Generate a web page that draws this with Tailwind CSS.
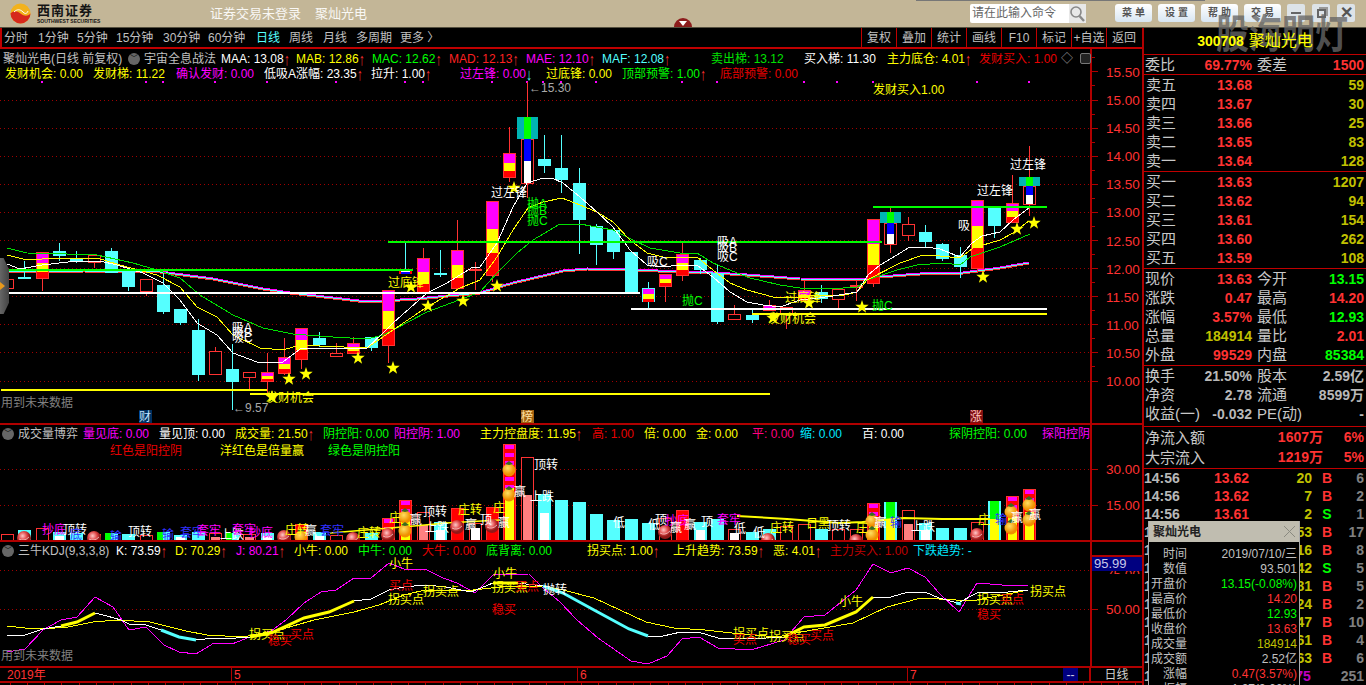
<!DOCTYPE html>
<html lang="zh">
<head>
<meta charset="UTF-8">
<title>聚灿光电 日线</title>
<script src="https://cdn.jsdelivr.net/npm/@tailwindcss/browser@4"></script>
</head>
<body class="relative w-[1366px] h-[685px] overflow-hidden bg-black text-[12px] leading-none text-[#c0c0c0] whitespace-nowrap [font-family:'Liberation_Sans','Noto_Sans_CJK_SC',sans-serif]">

<!-- 顶部标题栏 -->
<header class="relative flex items-center h-[28px] bg-[#c3b697] border-b border-[#55503f]">
  <svg class="ml-[10px]" width="21" height="21" viewBox="0 0 21 21">
    <circle cx="10.5" cy="10.5" r="10" fill="#f2b21c"/>
    <path d="M0.5 10.5a10 10 0 0 0 20 0c-3 3-6 3-10 0s-7-3-10 0z" fill="#d6281c"/>
    <path d="M4 9c3-3 6-3 9 0s4 1 5-1" fill="none" stroke="#fff" stroke-width="1"/>
  </svg>
  <div class="ml-[6px] w-[60px] text-[#141414]">
    <div class="text-[13px] font-bold tracking-[1px] leading-[13px]">西南证券</div>
    <div class="text-[5px] font-bold leading-[6px] mt-[1px]">SOUTHWEST SECURITIES</div>
  </div>
  <div class="ml-[113px] text-[13px] text-white/90">证券交易未登录</div>
  <div class="ml-[14px] text-[13px] text-white/90">聚灿光电</div>
  <div class="ml-auto mr-[11px] flex items-center gap-[6px] h-[19px] mt-[-1px]">
    <div class="flex items-center w-[116px] h-[19px] mr-[23px] bg-white rounded-[2px] text-[#666] pl-[2px]">
      <span class="flex-1">请在此输入命令</span>
      <svg class="bg-[#e8e8e8]" width="17" height="19" viewBox="0 0 17 19"><circle cx="7" cy="8" r="5" fill="none" stroke="#888" stroke-width="1.6"/><path d="M10.5 12l4.5 5" stroke="#888" stroke-width="2.4"/></svg>
    </div>
    <div class="w-[37px] h-[18px] flex items-center justify-center gap-[3px] rounded-[3px] bg-gradient-to-b from-white to-[#d8e6f2] text-[#555] text-[10px] font-bold">菜<span>单</span></div>
    <div class="w-[37px] h-[18px] flex items-center justify-center gap-[3px] rounded-[3px] bg-gradient-to-b from-white to-[#d8e6f2] text-[#555] text-[10px] font-bold">设<span>置</span></div>
    <div class="w-[37px] h-[18px] flex items-center justify-center gap-[3px] rounded-[3px] bg-gradient-to-b from-white to-[#d8e6f2] text-[#555] text-[10px] font-bold">帮<span>助</span></div>
    <div class="w-[37px] h-[18px] flex items-center justify-center gap-[3px] rounded-[3px] bg-gradient-to-b from-white to-[#d8e6f2] text-[#555] text-[10px] font-bold">交<span>易</span></div>
    <div class="flex items-center gap-[7px]">
      <div class="w-[18px] h-[18px] flex items-center justify-center rounded-[2px] bg-[#dde3e8]"><div class="w-[10px] h-[2px] bg-[#666]"></div></div>
      <div class="w-[18px] h-[18px] flex items-center justify-center rounded-[2px] bg-[#dde3e8]"><div class="w-[9px] h-[9px] border-2 border-[#666] shadow-[2px_-2px_0_#999]"></div></div>
      <div class="w-[18px] h-[18px] flex items-center justify-center rounded-[2px] bg-[#dde3e8] text-[#555] text-[16px] font-bold">✕</div>
    </div>
  </div>
  <!-- 收起按钮 -->
  <div class="absolute left-[674px] top-[18px] w-[18px] h-[9px] rounded-t-[9px] bg-[#8c1c1c] flex justify-center">
    <div class="mt-[3px] w-0 h-0 border-x-[4px] border-x-transparent border-t-[5px] border-t-white"></div>
  </div>
  <div class="absolute left-[916px] right-[161px] top-0 h-[1px] bg-[#777]"></div>
</header>

<main class="flex h-[657px]">
  <!-- 左侧图表列 -->
  <section class="w-[1142px] flex flex-col [&_i]:inline-block [&_i]:w-[8px] [&_i]:origin-center [&_i]:scale-y-[1.4]">
    <nav class="flex items-center h-[21px] border-b-2 border-[#c00000] border-l-2 border-l-[#c00000] shrink-0">
      <a class="w-[36px] pl-[2px]">分时</a>
      <a class="w-[39px]">1分钟</a>
      <a class="w-[39px]">5分钟</a>
      <a class="w-[47px]">15分钟</a>
      <a class="w-[45px]">30分钟</a>
      <a class="w-[48px]">60分钟</a>
      <a class="w-[33px] text-[#55ffff]">日线</a>
      <a class="w-[34px]">周线</a>
      <a class="w-[33px]">月线</a>
      <a class="w-[44px]">多周期</a>
      <a>更多 〉</a>
      <div class="ml-auto flex h-[19px] mr-[1px]">
        <a class="w-[35px] flex items-center justify-center border-l border-[#c00000]">复权</a>
        <a class="w-[35px] flex items-center justify-center border-l border-[#c00000]">叠加</a>
        <a class="w-[35px] flex items-center justify-center border-l border-[#c00000]">统计</a>
        <a class="w-[35px] flex items-center justify-center border-l border-[#c00000]">画线</a>
        <a class="w-[35px] flex items-center justify-center border-l border-[#c00000]">F10</a>
        <a class="w-[35px] flex items-center justify-center border-l border-[#c00000]">标记</a>
        <a class="w-[35px] flex items-center justify-center border-l border-[#c00000]">+自选</a>
        <a class="w-[35px] flex items-center justify-center border-l border-[#c00000]">返回</a>
      </div>
    </nav>

    <!-- K线主图 -->
    <div class="relative h-[376px] shrink-0">
      <svg id="kline" class="absolute inset-0" width="1142" height="376" viewBox="0 49 1142 376"></svg>
      <div class="relative flex items-center h-[17px] pl-[3px] pt-[2px]">
        <span class="w-[125px]">聚灿光电(日线 前复权)</span>
        <span class="w-[16px]"><span class="block w-[12px] h-[12px] rounded-full bg-[#666] text-center text-[8px] leading-[12px] text-black">﹀</span></span>
        <span class="w-[77px]">宇宙全息战法</span>
        <span class="w-[75px] text-white">MAA: 13.08<i class="not-italic text-[#ff3232]">↑</i></span>
        <span class="w-[76px] text-[#ffff00]">MAB: 12.86<i class="not-italic text-[#ff3232]">↑</i></span>
        <span class="w-[77px] text-[#00ff00]">MAC: 12.62<i class="not-italic text-[#ff3232]">↑</i></span>
        <span class="w-[77px] text-[#ff2020]">MAD: 12.13<i class="not-italic text-[#ff3232]">↑</i></span>
        <span class="w-[76px] text-[#ff00ff]">MAE: 12.10<i class="not-italic text-[#ff3232]">↑</i></span>
        <span class="w-[109px] text-[#55ffff]">MAF: 12.08<i class="not-italic text-[#ff3232]">↑</i></span>
        <span class="w-[93px] text-[#00e000]">卖出梯: 13.12</span>
        <span class="w-[83px] text-white">买入梯: 11.30</span>
        <span class="w-[92px] text-[#ffff00]">主力底仓: 4.01<i class="not-italic text-[#ff3232]">↑</i></span>
        <span class="w-[82px] overflow-hidden text-[#e80000]">发财买入: 1.00</span>
        <span class="w-[19px] text-[#999]">◇</span>
        <span class="block w-[11px] h-[11px] rounded-[2px] border border-[#777] bg-[#222]"></span>
      </div>
      <div class="relative flex items-center h-[15px] pl-[5px]">
        <span class="w-[88px] text-[#ffff00]">发财机会: 0.00</span>
        <span class="w-[83px] text-[#ffff00]">发财梯: 11.22</span>
        <span class="w-[88px] text-[#ff00ff]">确认发财: 0.00</span>
        <span class="w-[107px] text-white">低吸A涨幅: 23.35<i class="not-italic text-[#ff3232]">↑</i></span>
        <span class="w-[89px] text-white">拉升: 1.00<i class="not-italic text-[#ff3232]">↑</i></span>
        <span class="w-[86px] text-[#ff00ff]">过左锋: 0.00<i class="not-italic text-[#55ffff]">↓</i></span>
        <span class="w-[76px] text-[#ffff00]">过底锋: 0.00</span>
        <span class="w-[98px] text-[#00ff00]">顶部预警: 1.00<i class="not-italic text-[#ff3232]">↑</i></span>
        <span class="text-[#e80000]">底部预警: 0.00</span>
      </div>
    </div>

    <!-- 成交量副图 -->
    <div class="relative h-[117px] shrink-0">
      <svg id="volume" class="absolute inset-0" width="1142" height="117" viewBox="0 425 1142 117"></svg>
      <div class="relative flex items-center h-[17px] pl-[2px]">
        <span class="w-[16px]"><span class="block w-[12px] h-[12px] rounded-full bg-[#666] text-center text-[8px] leading-[12px] text-black">﹀</span></span>
        <span class="w-[65px]">成交量博弈</span>
        <span class="w-[76px] text-[#ff00ff]">量见底: 0.00</span>
        <span class="w-[76px] text-white">量见顶: 0.00</span>
        <span class="w-[88px] text-[#ffff00]">成交量: 21.50<i class="not-italic text-[#ff3232]">↑</i></span>
        <span class="w-[71px] text-[#00ff00]">阴控阳: 0.00</span>
        <span class="w-[86px] text-[#ff00ff]">阳控阴: 1.00</span>
        <span class="w-[112px] text-[#ffff00]">主力控盘度: 11.95<i class="not-italic text-[#ff3232]">↑</i></span>
        <span class="w-[52px] text-[#e80000]">高: 1.00</span>
        <span class="w-[52px] text-[#ffff00]">倍: 0.00</span>
        <span class="w-[56px] text-[#ffff00]">金: 0.00</span>
        <span class="w-[48px] text-[#ff0080]">平: 0.00</span>
        <span class="w-[62px] text-[#00e8ff]">缩: 0.00</span>
        <span class="w-[87px] text-white">百: 0.00</span>
        <span class="w-[93px] text-[#00ff00]">探阴控阳: 0.00</span>
        <span class="text-[#ff00ff]">探阳控阴</span>
      </div>
      <div class="relative flex h-[17px] items-center pl-[110px]">
        <span class="w-[110px] text-[#e80000]">红色是阳控阴</span>
        <span class="w-[108px] text-[#ffff00]">洋红色是倍量赢</span>
        <span class="text-[#00ff00]">绿色是阴控阳</span>
      </div>
    </div>

    <!-- KDJ副图 -->
    <div class="relative h-[124px] shrink-0">
      <svg id="kdj" class="absolute inset-0" width="1142" height="124" viewBox="0 542 1142 124"></svg>
      <div class="relative flex items-center h-[18px] pl-[2px]">
        <span class="w-[16px]"><span class="block w-[12px] h-[12px] rounded-full bg-[#666] text-center text-[8px] leading-[12px] text-black">﹀</span></span>
        <span class="w-[98px]">三牛KDJ(9,3,3,8)</span>
        <span class="w-[59px] text-white">K: 73.59<i class="not-italic text-[#ff3232]">↑</i></span>
        <span class="w-[61px] text-[#ffff00]">D: 70.29<i class="not-italic text-[#ff3232]">↑</i></span>
        <span class="w-[58px] text-[#ff00ff]">J: 80.21<i class="not-italic text-[#ff3232]">↑</i></span>
        <span class="w-[64px] text-[#ffff00]">小牛: 0.00</span>
        <span class="w-[64px] text-[#00ff00]">中牛: 0.00</span>
        <span class="w-[64px] text-[#e80000]">大牛: 0.00</span>
        <span class="w-[101px] text-[#00ff00]">底背离: 0.00</span>
        <span class="w-[86px] text-[#ffff00]">拐买点: 1.00<i class="not-italic text-[#ff3232]">↑</i></span>
        <span class="w-[100px] text-[#ffff00]">上升趋势: 73.59<i class="not-italic text-[#ff3232]">↑</i></span>
        <span class="w-[57px] text-[#ffff00]">恶: 4.01<i class="not-italic text-[#ff3232]">↑</i></span>
        <span class="w-[83px] text-[#c00000]">主力买入: 1.00</span>
        <span class="text-[#00e8ff]">下跌趋势: -</span>
      </div>
      <div class="absolute left-[1px] top-[108px] text-[#808080]">用到未来数据</div>
    </div>

    <!-- 时间轴 -->
    <div class="relative h-[17px] shrink-0 border-y-2 border-[#b00000] flex items-center text-[#ff3232]">
      <span class="w-[232px] pl-[7px] border-r border-[#b00000] h-full flex items-center">2019年</span>
      <span class="w-[346px] pl-[2px] border-r border-[#b00000] h-full flex items-center">5</span>
      <span class="w-[330px] pl-[2px] border-r border-[#b00000] h-full flex items-center">6</span>
      <span class="w-[155px] pl-[2px] h-full flex items-center">7</span>
      <span class="w-[15px] h-full bg-[#000080] text-white/80 flex items-center justify-center">--</span>
      <span class="w-[13px] h-full border-r-2 border-[#b00000]"></span>
      <span class="flex-1 text-center text-[#d0d0d0]">日线</span>
    </div>
    <svg id="ruler" class="shrink-0" width="1142" height="2" viewBox="0 0 1142 2"></svg>
  </section>

  <!-- 右侧盘口 -->
  <aside id="quote" class="relative w-[224px] border-l-2 border-[#b00000] text-[15px] text-[#c8c8c8] font-bold [&_.lb]:font-normal"></aside>
</main>

<!-- 水印 -->
<div class="absolute left-[1216px] top-[13px] origin-top scale-y-[1.2] text-[33px] leading-[36px] font-bold text-[#666666]/80">股海明灯</div>
<div class="absolute left-[1144px] w-[222px] top-[33px] flex justify-center items-center gap-[5px] text-[#ffff00] text-[14px] font-bold"><span>300708</span><span class="text-[16px] font-normal">聚灿光电</span></div>

<!-- 数据浮窗 -->
<div class="absolute left-[1148px] top-[521px] w-[152px] h-[164px] bg-black border-l border-r border-[#aaa] overflow-hidden">
  <div class="flex items-center justify-between h-[21px] bg-[#c0bdb0] pl-[4px] pr-[3px] text-[12px] font-bold text-[#222]">聚灿光电
    <svg width="13" height="13" viewBox="0 0 13 13"><path d="M1 1l11 11M12 1L1 12" stroke="#8a8a80" stroke-width="1"/></svg>
  </div>
  <div class="mt-[4px] text-[12px]">
    <div class="flex h-[15px] items-center"><span class="w-[38px] text-right text-[#c0c0c0]">时间</span><span class="flex-1 text-right pr-[2px] text-[#c0c0c0]">2019/07/10/三</span></div>
    <div class="flex h-[15px] items-center"><span class="w-[38px] text-right text-[#c0c0c0]">数值</span><span class="flex-1 text-right pr-[2px] text-[#c0c0c0]">93.501</span></div>
    <div class="flex h-[15px] items-center"><span class="w-[38px] text-right text-[#c0c0c0]">开盘价</span><span class="flex-1 text-right pr-[2px] text-[#00ff00]">13.15(-0.08%)</span></div>
    <div class="flex h-[15px] items-center"><span class="w-[38px] text-right text-[#c0c0c0]">最高价</span><span class="flex-1 text-right pr-[2px] text-[#ff3232]">14.20</span></div>
    <div class="flex h-[15px] items-center"><span class="w-[38px] text-right text-[#c0c0c0]">最低价</span><span class="flex-1 text-right pr-[2px] text-[#00ff00]">12.93</span></div>
    <div class="flex h-[15px] items-center"><span class="w-[38px] text-right text-[#c0c0c0]">收盘价</span><span class="flex-1 text-right pr-[2px] text-[#ff3232]">13.63</span></div>
    <div class="flex h-[15px] items-center"><span class="w-[38px] text-right text-[#c0c0c0]">成交量</span><span class="flex-1 text-right pr-[2px] text-[#c0c000]">184914</span></div>
    <div class="flex h-[15px] items-center"><span class="w-[38px] text-right text-[#c0c0c0]">成交额</span><span class="flex-1 text-right pr-[2px] text-[#c0c0c0]">2.52亿</span></div>
    <div class="flex h-[15px] items-center"><span class="w-[38px] text-right text-[#c0c0c0]">涨幅</span><span class="flex-1 text-right pr-[2px] text-[#ff3232]">0.47(3.57%)</span></div>
    <div class="flex h-[15px] items-center"><span class="w-[38px] text-right text-[#c0c0c0]">振幅</span><span class="flex-1 text-right pr-[2px] text-[#c0c0c0]">1.27(9.66%)</span></div>
  </div>
</div>

<!-- 左侧隐藏把手 -->
<div class="absolute left-0 top-[258px] w-[9px] h-[56px] bg-gradient-to-r from-[#666] to-[#444] [clip-path:polygon(0_0,40%_0,100%_20%,100%_80%,40%_100%,0_100%)] flex items-center">
  <div class="w-0 h-0 border-y-[4px] border-y-transparent border-l-[5px] border-l-[#e89a1c]"></div>
</div>

<script>
const RED = '#ff3232', DRED = '#b00000', CYAN = '#55ffff', YEL = '#ffff00', MAG = '#ff00ff', GRN = '#00ff00';
const cx = i => Math.round(7 + 17.32 * i);
const priceY = p => 381 - (p - 10) * 56.2;

const rect = (x, y, w, h, fill, stroke) =>
  `<rect x="${x}" y="${y}" width="${w}" height="${h}" fill="${fill}"${stroke ? ` stroke="${stroke}"` : ''} shape-rendering="crispEdges"/>`;
const line = (x1, y1, x2, y2, c, w = 1, extra = '') =>
  `<line x1="${x1}" y1="${y1}" x2="${x2}" y2="${y2}" stroke="${c}" stroke-width="${w}" shape-rendering="crispEdges" ${extra}/>`;
const poly = (pts, c, w = 1, dy = 0) =>
  `<polyline points="${pts.map(p => p[0] + ',' + (p[1] + dy)).join(' ')}" fill="none" stroke="${c}" stroke-width="${w}"${w === 1 ? ' shape-rendering="crispEdges"' : ''}/>`;
const text = (x, y, t, c, size = 12, anchor = 'start') =>
  `<text x="${x}" y="${y}" fill="${c}" font-size="${size}" text-anchor="${anchor}">${t}</text>`;
const star = (x, y, r = 7) => {
  let pts = [];
  for (let k = 0; k < 10; k++) {
    const a = -Math.PI / 2 + k * Math.PI / 5, rr = k % 2 ? r * 0.4 : r;
    pts.push((x + rr * Math.cos(a)).toFixed(1) + ',' + (y + rr * Math.sin(a)).toFixed(1));
  }
  return `<polygon points="${pts.join(' ')}" fill="#ffff00"/>`;
};

// [序号, 类型, 实体上沿, 实体下沿, 上影, 下影]  r空心红 c青 t三色 s特殊
const candles = [
  [0,'r',279,288,279,288],[1,'d',277,277,261,277],[2,'t',252,278,252,291],[3,'c',251,256,243,261],
  [4,'d',259,259,251,263],[5,'r',255,262,255,268],[6,'c',251,273,248,273],[7,'c',271,287,268,291],
  [8,'r',279,291,279,296],[9,'c',285,312,273,314],[10,'c',309,323,309,325],[11,'c',330,375,319,381],
  [12,'r',351,374,347,374],[13,'c',369,382,344,410],[14,'r',372,377,372,390],[15,'t',372,381,353,393],
  [16,'t',357,373,338,375],[17,'t',328,359,328,369],[18,'c',338,345,332,347],[19,'r',353,356,343,356],
  [20,'t',343,353,337,353],[21,'c',337,348,337,351],[22,'t',290,345,290,363],[23,'x',269,274,243,274],
  [24,'t',258,293,248,293],[25,'d',273,275,250,277],[26,'t',250,288,220,288],[27,'e',269,270,262,290],
  [28,'t',201,275,201,282],[29,'t',153,177,127,182],[30,'s',117,183,82,198],[31,'c',159,166,135,173],
  [32,'c',168,180,135,193],[33,'c',183,220,168,254],[34,'c',226,245,224,265],[35,'c',230,252,230,259],
  [36,'c',252,293,252,293],[37,'y',288,302,282,308],[38,'t',274,286,274,302],[39,'t',254,275,243,281],
  [40,'c',260,270,258,274],[41,'c',273,322,265,324],[42,'r',314,319,305,319],[43,'c',315,320,310,323],
  [44,'t',305,310,300,311],[45,'r',307,313,307,329],[46,'t',290,300,280,300],[47,'c',292,299,285,303],
  [48,'r',289,299,288,308],[49,'e',285,287,280,301],[50,'t',219,283,219,287],[51,'s',212,244,208,253],
  [52,'r',224,235,217,241],[53,'c',232,242,225,247],[54,'c',244,259,243,261],[55,'c',255,267,247,278],
  [56,'t',200,268,200,272],[57,'c',208,226,208,238],[58,'t',203,222,175,222],[59,'s',177,204,146,216]
];

function drawCandle([i, t, top, bot, wt, wb]) {
  const x = cx(i), h = bot - top;
  const wickColor = (t === 'c' || t === 'd' || t === 'y' || t === 'x') ? CYAN : RED;
  let s = line(x + .5, wt, x + .5, wb, wickColor);
  if (t === 'r') s += rect(x - 6 + .5, top + .5, 12, Math.max(h, 2), '#000', RED);
  if (t === 'e') s += rect(x - 6, top, 13, h + 1, RED);
  if (t === 'c') s += rect(x - 6, top, 13, Math.max(h, 2), CYAN);
  if (t === 'd') s += rect(x - 6, top, 13, 2, CYAN);
  if (t === 't' || t === 'y') {
    const a = Math.round(h * .37), b = Math.round(h * .33);
    if (t === 'y') s += rect(x - 6, top, 13, h, CYAN);
    if (t === 't') s += rect(x - 6 + .5, top + .5, 12, h, '#000', RED);
    s += rect(x - 5, top + 1, 11, a, MAG) + rect(x - 5, top + 1 + a, 11, b, YEL) + rect(x - 5, top + 1 + a + b, 11, h - a - b - 1, '#ff0000');
  }
  if (t === 'x') s += rect(x - 6, top, 13, h, '#ff0000') + rect(x - 4, top + 1, 9, 2, '#fff') + rect(x - 4, top + 3, 9, 2, '#0000ff');
  if (t === 's') {
    const band = Math.round(h / 3);
    s += rect(x - 6 + .5, top + band + .5, 12, h - band, '#000', RED);
    s += rect(x - 10, top, 21, band, '#00b4b4') + rect(x - 3, top, 7, band, GRN);
    s += rect(x - 3, top + band, 7, band, '#0000ff') + rect(x - 3, top + band * 2, 7, h - band * 2, '#fff');
  }
  return s;
}

const maWhite = [[7,264],[20,269],[42,265],[77,261],[100,261],[117,265],[143,273],[163,283],[180,300],[197,323],[217,335],[233,353],[257,362],[267,363],[283,362],[300,349],[320,348],[353,348],[367,348],[383,333],[393,323],[427,293],[447,283],[473,267],[480,267],[497,243],[513,207],[527,183],[543,178],[552,178],[563,183],[580,197],[597,212],[613,227],[630,250],[647,265],[663,267],[680,265],[697,265],[713,277],[730,292],[747,302],[763,305],[780,307],[800,300],[817,298],[833,296],[857,292],[868,275],[880,265],[897,255],[908,248],[925,247],[940,249],[960,257],[972,243],[982,236],[1000,232],[1013,220],[1029,208]];
const maYellow = [[7,255],[27,260],[57,258],[97,258],[120,265],[157,275],[180,287],[197,307],[217,317],[233,335],[260,348],[283,350],[300,345],[320,346],[367,348],[393,330],[427,307],[460,288],[480,280],[497,257],[513,230],[528,208],[543,202],[562,198],[580,205],[597,212],[613,222],[630,240],[647,253],[663,257],[697,257],[713,270],[730,283],[747,290],[773,297],[797,298],[817,295],[840,296],[857,292],[867,280],[900,263],[923,255],[940,256],[960,258],[973,248],[1000,240],[1013,233],[1029,221]];
const maGreen = [[7,248],[27,253],[67,254],[97,255],[133,263],[157,270],[180,278],[200,295],[233,315],[263,328],[293,334],[333,337],[367,339],[383,335],[393,330],[427,312],[467,297],[480,292],[497,273],[517,253],[533,240],[560,224],[580,224],[613,230],[633,240],[650,248],[680,253],[697,253],[713,263],[737,273],[750,278],[780,285],[800,288],[830,289],[857,287],[867,280],[897,270],[917,265],[943,263],[960,265],[970,257],[1000,247],[1030,234]];
const maPack = [[1,272],[84,271],[160,272],[213,279],[263,289],[290,293],[333,298],[367,302],[417,299],[480,293],[513,283],[547,275],[563,271],[587,269],[630,270],[713,273],[747,275],[800,279],[860,280],[880,277],[933,273],[963,273],[1000,268],[1029,263]];

function drawKline() {
  let s = '';
  for (let p = 10; p <= 15; p += .5) s += line(0, priceY(p), 1090, priceY(p), '#a00000', 1, 'stroke-dasharray="1 3"');
  [42,146,163,215,267,336,405,423,492,527,543,561,596,682,717,804,837,873,977,1029].forEach(x => s += rect(x - 1, 81, 2, 2, MAG));
  s += poly(maPack, MAG, 1, -1) + poly(maPack, CYAN, 1, 0) + poly(maPack, RED, 1, 1);
  candles.forEach(c => s += drawCandle(c));
  s += poly(maGreen, '#00e000') + poly(maYellow, YEL) + poly(maWhite, '#fff');
  [[1,413,270,GRN],[1,640,293,'#fff'],[1,267,390,YEL],[250,770,394,YEL],[388,882,242,GRN],[631,1047,309,'#fff'],[752,1047,314,YEL],[873,1047,207,GRN]]
    .forEach(l => s += rect(l[0], l[2] - 1, l[1] - l[0], 2, l[3]));
  [[289,379],[306,374],[358,358],[393,368],[411,287],[428,306],[463,301],[497,286],[272,397],[514,188],[773,318],[809,303],[862,307],[983,277],[1017,229],[1034,223]]
    .forEach(p => s += star(p[0], p[1]));
  [[388,287,'过底锋',YEL],[491,197,'过左锋','#fff'],[977,195,'过左锋','#fff'],[1010,169,'过左锋','#fff'],[232,332,'吸A','#fff'],[232,337,'吸B','#fff'],[232,342,'吸C','#fff'],
   [527,208,'抛A',GRN],[527,215,'抛B',GRN],[527,225,'抛C',GRN],[647,266,'吸C','#fff'],[958,230,'吸','#fff'],[717,246,'吸A','#fff'],[717,252,'吸B','#fff'],[717,261,'吸C','#fff'],
   [682,305,'抛C',GRN],[872,310,'抛C',GRN],[785,302,'过底锋',YEL],[768,323,'发财机会',YEL],[266,402,'发财机会',YEL],[873,94,'发财买入1.00',YEL]]
    .forEach(l => s += text(l[0], l[1], l[2], l[3]));
  s += text(529, 92, '←15.30', '#a8a8a8') + text(233, 412, '←9.57', '#a8a8a8') + text(1, 407, '用到未来数据', '#808080');
  s += rect(139, 410, 13, 14, '#003060') + text(139, 421, '财', '#c0e0ff');
  s += rect(521, 410, 13, 14, '#a06010') + text(521, 421, '榜', '#ffe0a0');
  s += rect(970, 410, 13, 14, '#801010') + text(970, 421, '涨', '#ffc0c0');
  s += rect(0, 423, 1142, 2, DRED) + rect(1090, 49, 2, 376, DRED);
  for (let p = 10; p <= 15.5; p += .5) {
    s += line(1092, priceY(p), 1098, priceY(p), DRED) + line(1092, priceY(p + .25), 1095, priceY(p + .25), DRED);
    s += text(1106, priceY(p) + 5, p.toFixed(2), RED, 13.5);
  }
  document.getElementById('kline').innerHTML = s;
}

// [序号, 类型, 顶部]
const vols = [[0,'h',534],[1,'c',530],[2,'h',528],[3,'w',532],[4,'c',533],[5,'h',534],[6,'g',533],[7,'c',534],[8,'h',535],[9,'g',532],[10,'w',535],[11,'c',532],[12,'p',533],[13,'g',533],[14,'p',534],[15,'w',533],[16,'h',534],[17,'f',524],[18,'w',532],[19,'h',535],[20,'h',535],[21,'c',533],[22,'m',518],[23,'m',500],[24,'p',512],[25,'w',522],[26,'f',508],[27,'q',523],[28,'f',507],[29,'m',444],[30,'p',457],[31,'w',494],[32,'c',500],[33,'c',502],[34,'c',514],[35,'c',520],[36,'c',519],[37,'c',523],[38,'h',518],[39,'f',510],[40,'w',522],[41,'c',519],[42,'q',529],[43,'c',532],[44,'c',529],[45,'h',526],[46,'h',524],[47,'c',529],[48,'h',529],[49,'h',529],[50,'m',503],[51,'n',502],[52,'p',510],[53,'w',523],[54,'c',528],[55,'c',528],[56,'h',522],[57,'n',501],[58,'m',496],[59,'m',489]];

const drawBall = (x, y) => `<circle cx="${x}" cy="${y}" r="7" fill="url(#ballG)"/><path d="M${x-5} ${y+1}q5 3 10-2" stroke="#fff" stroke-opacity=".6" fill="none"/>`;
const drawOrange = (x, y) => `<circle cx="${x}" cy="${y}" r="6.5" fill="url(#orangeG)"/><path d="M${x-4} ${y-6}l4 -3 4 3-4 1z" fill="#3a6a20"/>`;

function drawVolume() {
  let s = '<defs><radialGradient id="ballG" cx=".4" cy=".35"><stop offset="0" stop-color="#ffc8c8"/><stop offset=".6" stop-color="#e04848"/><stop offset="1" stop-color="#901818"/></radialGradient><radialGradient id="orangeG" cx=".4" cy=".35"><stop offset="0" stop-color="#ffe060"/><stop offset="1" stop-color="#f09000"/></radialGradient></defs>';
  s += line(0, 469, 1090, 469, '#a00000', 1, 'stroke-dasharray="1 3"') + line(0, 505, 1090, 505, '#a00000', 1, 'stroke-dasharray="1 3"');
  const B = 541;
  vols.forEach(([i, t, top]) => {
    const x = cx(i) - 6, h = B - top;
    if (t === 'c') s += rect(x, top, 13, h, CYAN);
    if (t === 'w') s += rect(x, top, 13, h, CYAN) + rect(x + 2, top + Math.round(h * .4), 9, h - Math.round(h * .4), '#fff');
    if (t === 'g') s += rect(x, top, 13, h, CYAN) + rect(x, top, 6, h, GRN);
    if (t === 'h') s += rect(x + .5, top + .5, 12, h - 1, '#000', RED);
    if (t === 'p') s += rect(x + .5, top + .5, 12, h - 1, '#000', RED) + rect(x + 2, top + Math.round(h * .45), 9, h - Math.round(h * .45) - 1, '#ff8080');
    if (t === 'q') s += rect(x + .5, top + .5, 12, h - 1, '#000', RED) + rect(x + 2, top + Math.round(h * .3), 9, h - Math.round(h * .3) - 1, '#fff');
    if (t === 'f') s += rect(x + .5, top + .5, 12, h - 1, '#ff0000', RED);
    if (t === 'n') s += rect(x, top, 13, h, CYAN) + rect(x + 2, top, 9, Math.round(h * .45), GRN) + rect(x + 2, top + Math.round(h * .45), 9, h - Math.round(h * .45), YEL);
    if (t === 'm') {
      s += rect(x + .5, top + .5, 12, h - 1, '#ff0000', RED);
      for (let y = top + 1; y < top + h * .45; y += 8) s += rect(x + 2, y, 9, 4, MAG);
      s += rect(x + 2, top + Math.round(h * .45), 9, h - Math.round(h * .45) - 1, YEL);
    }
  });
  s += poly([[330,533],[414,526],[446,523],[500,520]], YEL, 1.5);
  s += poly([[737,516],[787,519],[839,523],[863,522],[904,518],[942,519],[990,519]], YEL, 2);
  [[24,538],[94,538],[284,537],[353,539],[388,535],[457,527],[492,526],[665,532],[768,540],[856,541],[977,535]].forEach(b => s += drawBall(b[0], b[1]));
  [[301,537],[405,517],[405,531],[509,470],[509,495],[872,521],[872,535],[1011,512],[1011,528],[1029,505],[1029,520]].forEach(o => s += drawOrange(o[0], o[1]));
  const W = '#fff', BL = '#3030ff';
  [[42,530,'抄底',MAG],[63,530,'顶转',W],[70,535,'底',BL],[110,537,'输',BL],[128,532,'顶转',W],[162,535,'输',BL],[180,533,'套牢',BL],[197,531,'套牢',MAG],[220,535,'上跌',W],[232,530,'套牢',MAG],[249,533,'抄底',MAG],[285,530,'庄转',YEL],[305,531,'赢',W],[320,531,'套牢',BL],[357,533,'庄转',YEL],
   [389,518,'庄',YEL],[410,520,'赢',W],[423,512,'顶转',W],[425,528,'上跌',W],[458,510,'庄转',YEL],[465,525,'赢',W],[480,520,'顶',W],[498,523,'赢',W],[493,508,'庄',YEL],[514,492,'赢',W],[534,465,'顶转',W],[530,497,'上跌',W],
   [613,523,'低',W],[648,525,'低',W],[655,520,'顶',W],[665,521,'抄底',MAG],[670,528,'赢',W],[684,525,'赢',W],[701,522,'顶',W],[717,520,'套牢',MAG],[734,529,'低',W],[753,533,'低',W],[770,528,'庄转',YEL],[806,524,'日黑',YEL],[827,526,'顶转',W],[856,528,'庄',YEL],[874,523,'赢',W],[890,523,'输',BL],[911,527,'上跌',W],[978,520,'庄',YEL],[995,520,'输',BL],[1011,518,'赢',W],[1029,515,'赢',W]]
    .forEach(l => s += text(l[0], l[1] + 4, l[2], l[3]));
  s += rect(0, 540, 1142, 2, DRED) + rect(1090, 425, 2, 117, DRED);
  [469, 505].forEach(y => s += line(1092, y, 1098, y, DRED));
  s += text(1106, 474, '30.00', RED, 13.5) + text(1106, 510, '15.00', RED, 13.5);
  document.getElementById('volume').innerHTML = s;
}

const kK = [[7,635],[25,635],[43,629],[61,626],[77,622],[95,613],[107,616],[121,620],[129,624],[146,625],[161,630],[179,637],[196,640],[214,638],[236,638],[250,637],[271,633],[304,618],[329,612],[354,601],[371,599],[389,590],[404,587],[425,585],[446,587],[471,592],[493,583],[518,583],[543,586],[563,593],[594,610],[629,629],[648,636],[663,636],[681,632],[698,632],[718,638],[749,639],[784,637],[804,627],[825,625],[856,612],[873,597],[891,597],[908,592],[925,592],[939,598],[958,603],[977,593],[1008,592],[1028,590]];
const kD = [[7,626],[25,628],[43,629],[68,627],[93,622],[118,620],[150,622],[186,631],[207,635],[243,637],[279,630],[314,620],[354,612],[379,605],[404,595],[425,590],[464,591],[500,587],[543,586],[563,590],[594,598],[646,622],[674,628],[705,630],[732,633],[777,637],[801,632],[853,623],[887,607],[921,598],[956,600],[977,600],[1028,590]];
const kJ = [[7,652],[25,649],[43,630],[61,620],[77,617],[95,597],[113,607],[129,630],[146,627],[164,645],[179,652],[196,654],[214,643],[232,644],[250,637],[271,631],[286,620],[304,603],[321,592],[336,590],[354,578],[371,578],[389,563],[404,569],[425,569],[443,578],[457,583],[475,593],[493,575],[529,574],[543,588],[560,602],[577,620],[598,638],[631,661],[648,664],[667,656],[682,639],[699,637],[718,648],[751,650],[784,640],[804,617],[825,615],[856,590],[873,564],[891,573],[908,568],[925,577],[939,593],[959,612],[977,583],[1002,585],[1028,585]];

function drawKdj() {
  let s = line(0, 570, 1090, 570, '#a00000', 1, 'stroke-dasharray="1 3"') + line(0, 609, 1090, 609, '#a00000', 1, 'stroke-dasharray="1 3"');
  s += poly(kJ, MAG) + poly(kD, YEL) + poly(kK, '#fff');
  s += poly([[61,626],[77,622],[95,613]], YEL, 3) + poly([[250,637],[271,633],[304,618],[329,612],[354,601]], YEL, 3);
  s += poly([[493,583],[518,583]], YEL, 3) + poly([[784,637],[804,627],[825,625],[856,612],[873,597]], YEL, 3);
  s += poly([[161,630],[179,637],[196,640]], CYAN, 3) + poly([[543,586],[563,593],[594,610],[629,629],[648,636]], CYAN, 3) + poly([[956,603],[961,604]], CYAN, 3);
  const R = '#f00000';
  [[389,568,'小牛',YEL],[389,590,'买点',R],[388,604,'拐买点',YEL],[423,596,'拐买点',YEL],[249,639,'拐买点',YEL],[268,645,'稳买',R],[290,639,'买点',R],[493,578,'小牛',YEL],[492,592,'拐买点',YEL],[515,591,'买点',R],[492,614,'稳买',R],[733,638,'拐买点',YEL],[733,644,'买点',R],[769,641,'拐买点',YEL],[787,644,'稳买',R],[810,640,'买点',R],[839,606,'小牛',YEL],[977,604,'拐买点',YEL],[1000,604,'买点',R],[977,619,'稳买',R],[1030,596,'拐买点',YEL],[543,594,'抛转','#fff']]
    .forEach(l => s += text(l[0], l[1], l[2], l[3]));
  s += rect(1090, 542, 2, 124, DRED) + rect(1092, 555, 50, 2, DRED);
  s += text(1106, 579, '75.00', RED, 13.5) + rect(1092, 574, 50, 8, '#000');
  s += rect(1092, 557, 50, 14, '#000080') + text(1094, 568, '95.99', '#c8c8e8', 13);
  s += line(1092, 609, 1098, 609, DRED) + text(1106, 614, '50.00', RED, 13.5);
  document.getElementById('kdj').innerHTML = s;
}

function drawRuler() {
  let s = '';
  for (let x = 10; x < 1140; x += 17.32) s += line(x, 0, x, 2, DRED);
  document.getElementById('ruler').innerHTML = s;
}

// 右侧盘口
const sep = '<div class="h-[1px] bg-[#c00000]"></div>';
const gap = n => n === 1 ? '<div class="h-[1px]"></div>' : '<div class="h-[3px]"></div>';
const row5 = ([l, p, v]) => `<div class="flex items-center h-[19px]"><span class="lb w-[42px] pl-[2px]">${l}</span><span class="w-[66px] text-right text-[14px] text-[#ff3232]">${p}</span><span class="flex-1 text-right pr-[2px] text-[14px] text-[#c0c000]">${v}</span></div>`;
const row4 = ([l, v, c, l2, v2, c2]) => `<div class="flex items-center h-[19px]"><span class="lb shrink-0 w-[40px] pl-[1px]">${l}</span><span class="w-[68px] text-right text-[14px] ${c}">${v}</span><span class="lb ml-[5px] w-[36px]">${l2}</span><span class="flex-1 text-right pr-[2px] text-[14px] ${c2}">${v2}</span></div>`;
const R_ = 'text-[#ff3232]', G_ = 'text-[#00ff00]', Y_ = 'text-[#c0c000]', W_ = 'text-[#b8b8b8]';
let h = '<div class="h-[26px]"></div>' + sep;
h += '<div class="flex items-center h-[19px]"><span class="lb w-[40px] pl-[1px]">委比</span><span class="w-[68px] text-right text-[14px] text-[#ff3232]">69.77%</span><span class="lb ml-[5px] w-[36px]">委差</span><span class="flex-1 text-right pr-[2px] text-[14px] text-[#ff3232]">1500</span></div>' + sep;
h += [['卖五','13.68',59],['卖四','13.67',30],['卖三','13.66',25],['卖二','13.65',83],['卖一','13.64',128]].map(row5).join('') + gap(1) + sep;
h += [['买一','13.63',1207],['买二','13.62',94],['买三','13.61',154],['买四','13.60',262],['买五','13.59',108]].map(row5).join('') + gap(1) + sep;
h += [['现价','13.63',R_,'今开','13.15',G_],['涨跌','0.47',R_,'最高','14.20',R_],['涨幅','3.57%',R_,'最低','12.93',G_],['总量','184914',Y_,'量比','2.01',R_],['外盘','99529',R_,'内盘','85384',G_]].map(row4).join('') + gap(1) + sep;
h += [['换手','21.50%',W_,'股本','2.59亿',W_],['净资','2.78',W_,'流通','8599万',W_],['收益(一)','-0.032',W_,'PE(动)','-',W_]].map(row4).join('') + gap(3) + sep;
h += [['净流入额','1607万','6%'],['大宗流入','1219万','5%']].map(r => `<div class="flex items-center h-[20px]"><span class="lb w-[100px] pl-[1px]">${r[0]}</span><span class="w-[79px] text-right text-[14px] text-[#ff3232]">${r[1]}</span><span class="flex-1 text-right pr-[2px] text-[14px] text-[#ff3232]">${r[2]}</span></div>`).join('') + gap(1) + sep;
const ticks = [['13.62',20,'B',6],['13.62',7,'B',2],['13.61',2,'S',1],['13.62',53,'B',17],['13.62',16,'B',8],['13.61',42,'S',5],['13.63',81,'B',5],['13.63',24,'B',2],['13.63',47,'B',10],['13.63',61,'B',4],['13.63',63,'B',6],['13.63',75,'',251]];
h += ticks.map(t => `<div class="flex items-center h-[18px] text-[14px]"><span class="w-[40px] text-[#b8b8b8]">14:56</span><span class="w-[65px] text-right text-[#ff3232]">${t[0]}</span><span class="w-[63px] text-right ${t[2] ? 'text-[#c0c000]' : 'text-[#c000c0]'}">${t[1]}</span><span class="w-[30px] text-center ${t[2] === 'S' ? 'text-[#00ff00]' : 'text-[#ff3232]'}">${t[2]}</span><span class="flex-1 text-right pr-[2px] text-[#808080]">${t[3]}</span></div>`).join('');
document.getElementById('quote').innerHTML = h;

drawKline();
drawVolume();
drawKdj();
drawRuler();
</script>
</body>
</html>
